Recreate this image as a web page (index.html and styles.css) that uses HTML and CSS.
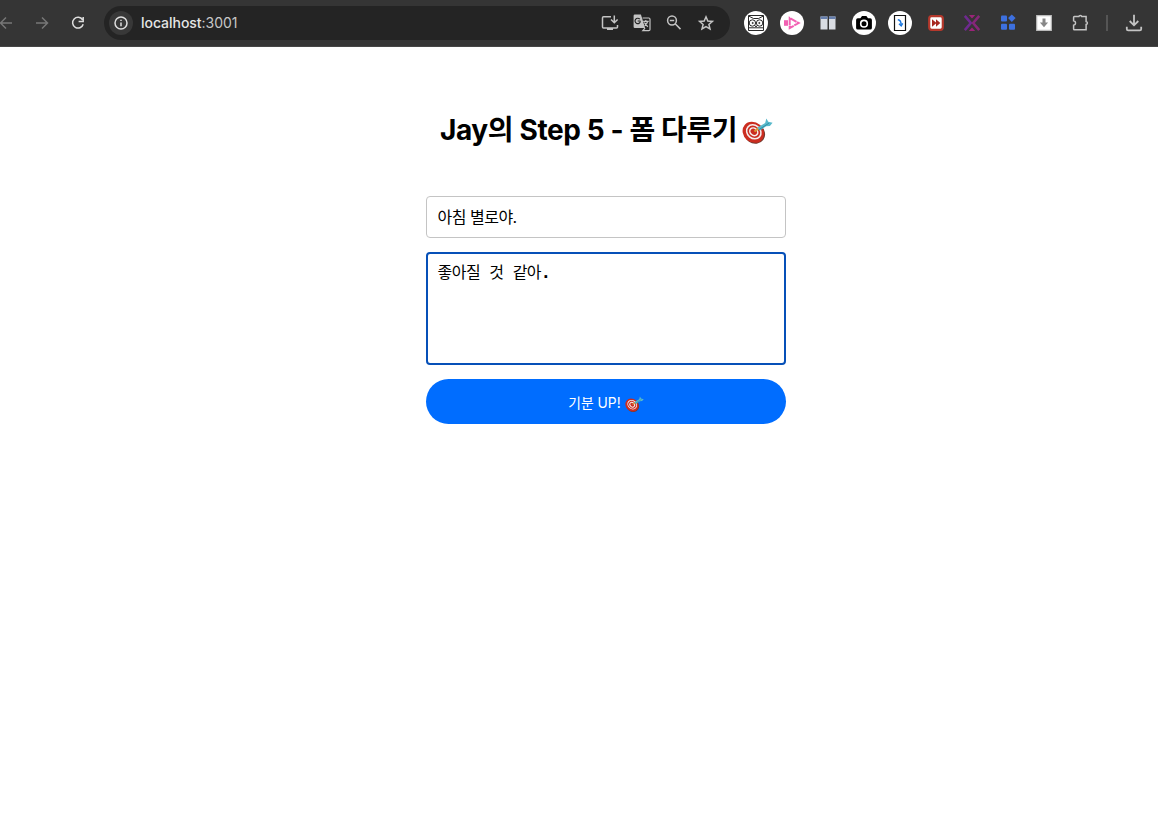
FILE: index.html
```html
<!DOCTYPE html>
<html lang="ko">
<head>
<meta charset="utf-8">
<title>Step 5</title>
<link rel="stylesheet" href="styles.css">
</head>
<body>
<svg class="defs" width="0" height="0">
  <symbol id="dart" viewBox="0 0 30 26">
    <ellipse cx="12.2" cy="15" rx="10.4" ry="9.6" transform="rotate(35 12.2 15)" fill="#6e3b31"/>
    <ellipse cx="11" cy="13.8" rx="11" ry="9.6" transform="rotate(40 11 13.8)" fill="#cb2d20"/>
    <g fill="none" transform="rotate(40 11.4 13.3)">
      <ellipse cx="11.4" cy="13.3" rx="7.4" ry="6.3" stroke="#f5eeee" stroke-width="1.5"/>
      <ellipse cx="11.4" cy="13.3" rx="4.1" ry="3.4" stroke="#f5eeee" stroke-width="1.5"/>
    </g>
    <path d="M12 13l4-3" stroke="#d79b38" stroke-width="2"/>
    <path d="M15 9.2L22.4 4.8 23.6 0.4 25.4 3.6 29.6 4.6 27 7.6 23.4 8 17 12.2z" fill="#58b9cb"/>
    <path d="M16.5 11.2L26 5" stroke="#2c8ca1" stroke-width=".9"/>
  </symbol>
</svg>
<header class="toolbar">
  <nav class="nav">
    <svg class="icon dim" viewBox="0 0 24 24"><path d="M18 12H6.8M12 6.5L6.5 12l5.5 5.5"/></svg>
    <svg class="icon dim" viewBox="0 0 24 24"><path d="M6 12h11.2M12 6.5l5.5 5.5-5.5 5.5"/></svg>
    <svg class="icon light" viewBox="0 0 24 24"><path d="M16.6 8.8A5.4 5.4 0 1 0 17.2 13.2M17.2 6v4.4h-4.6"/></svg>
  </nav>
  <div class="address">
    <span class="info"><svg class="icon light" viewBox="0 0 24 24"><circle cx="12" cy="12" r="6"/><path d="M12 11.4v3.8M12 8.7v1.4"/></svg></span>
    <span class="url">localhost<span class="port">:3001</span></span>
    <div class="actions">
      <svg class="icon" viewBox="0 0 24 24"><path d="M13 5.8H5.5q-1 0-1 1v9.1q0 1 1 1h13q1 0 1-1V14M16.3 4.5v6.8M13 8.5l3.3 3.3 3.3-3.3"/><path d="M9 17h6v2H9z" class="solid"/></svg>
      <svg class="icon" viewBox="0 0 24 24"><path d="M4.8 3.5h6.1l1.2 3.7 3 9.8H4.8q-1.2 0-1.2-1.2V4.7q0-1.2 1.2-1.2z" class="solid"/><path d="M10.5 10H7.7M9.8 8.2a2.7 2.7 0 1 0 .6 2.3" class="cut"/><path d="M12.6 7h6.2q1.2 0 1.2 1.2v10.3q0 1.2-1.2 1.2h-6l2.2-2.6M13.2 10.4h5.5M15.8 9v1.4M17.6 10.5q-.6 2.6-3 4M14.4 11.5q1 2.3 3.5 4.3" stroke-width="1.2"/></svg>
      <svg class="icon" viewBox="0 0 24 24"><circle cx="10" cy="9.5" r="4.4"/><path d="M13.2 12.8l5.3 5.3M7.8 9.5h4.4"/></svg>
      <svg class="icon" viewBox="0 0 24 24"><path d="M12 5.8l1.8 4.2 4.6.4-3.5 3 1.1 4.5-4-2.4-4 2.4 1.1-4.5-3.5-3 4.6-.4z"/></svg>
    </div>
  </div>
  <div class="extensions">
    <svg class="icon" viewBox="0 0 24 24"><circle cx="12" cy="12" r="12" fill="#fff" stroke="none"/><g stroke="#111" stroke-width=".9"><path d="M4.5 4.5h15v15h-15zM5 5.2l4.5 2.3h5L19 5.2M5 16.8h14M11 14.5l1 1.5 1-1.5"/><circle cx="8.4" cy="12" r="3.2"/><circle cx="15.6" cy="12" r="3.2"/><circle cx="8.7" cy="12" r=".6"/><circle cx="15.3" cy="12" r=".6"/></g></svg>
    <svg class="icon" viewBox="0 0 24 24"><circle cx="12" cy="12" r="12" fill="#fff" stroke="none"/><path d="M4 9.2h4v5.6H4z" fill="#f261b3" stroke="none"/><path d="M9.7 7v10l9-5z" stroke="#f261b3" stroke-width="2" stroke-dasharray="7 .6"/></svg>
    <svg class="icon" viewBox="0 0 24 24"><g stroke="none"><path d="M4.5 5.5h7v13h-7zM13 5.5h6.5v13H13z" fill="#d9dce2"/><path d="M4.5 5.5h7v2.6h-7zM13 5.5h6.5v2.6H13z" fill="#667fae"/></g></svg>
    <svg class="icon" viewBox="0 0 24 24"><circle cx="12" cy="12" r="12" fill="#fff" stroke="none"/><path d="M5.8 7.2h2.6L10 5h4.4L16 7.2h2.2q1.7 0 1.7 1.7v8q0 1.7-1.7 1.7H5.8q-1.7 0-1.7-1.7v-8q0-1.7 1.7-1.7z" fill="#000" stroke="none"/><circle cx="12" cy="12.7" r="3.3" stroke="#fff" stroke-width="1.6"/></svg>
    <svg class="icon" viewBox="0 0 24 24"><circle cx="12" cy="12" r="12" fill="#fff" stroke="none"/><path d="M6.5 4.5h11v15h-11z" stroke="#111" stroke-width="1.2"/><path d="M9.8 8.7q3.4.4 3.2 4.6M11 12.8l2.2 2 1.5-2.4" stroke="#1675e0" stroke-width="1.4"/></svg>
    <svg class="icon" viewBox="0 0 24 24"><rect x="5.2" y="5.2" width="13.6" height="13.6" rx="2.5" fill="#fff" stroke="#b5382c" stroke-width="2.2"/><path d="M8 8.3l4 3.3V8.3l4.3 3.7-4.3 3.7v-3.3l-4 3.3z" fill="#a82820" stroke="none"/></svg>
    <svg class="icon" viewBox="0 0 24 24"><g fill="none" stroke-width="2.6"><path d="M4.8 4.8l6 7.2-6 7.2" stroke="#6e2a8e"/><path d="M19.2 4.8l-6 7.2 6 7.2" stroke="#852778"/></g><path d="M8.8 4h6.4L12 7.4zM8.8 20h6.4L12 16.6z" fill="#9a2478" stroke="none"/></svg>
    <svg class="icon" viewBox="0 0 24 24"><g fill="#3d70df" stroke="none"><rect x="5" y="4.5" width="6" height="6" rx="1"/><rect x="5" y="12.7" width="6" height="6" rx="1"/><rect x="13" y="12.7" width="6" height="6" rx="1"/><path d="M15.8 3.4l3.8 3.7-3.8 3.8-3.7-3.8z"/></g></svg>
    <svg class="icon" viewBox="0 0 24 24"><path d="M4.7 4.7h14.6v14.6H4.7z" fill="#fff" stroke="#bbb" stroke-width="1.2"/><path d="M10.5 7.5h3v4h2.6L12 16.2l-4.1-4.7h2.6z" fill="#888" stroke="none"/></svg>
    <svg class="icon" viewBox="0 0 24 24"><path d="M6.4 5.6h4.4q.2-1.2 1.5-1.2t1.5 1.2h4.3v5q1.3.2 1.3 1.4t-1.3 1.4v5.4H6.4q-.8 0-.8-.8v-3.8q2-.3 2-2.2t-2-2.2V6.4q0-.8.8-.8z"/></svg>
    <span class="divider"></span>
    <svg class="icon" viewBox="0 0 24 24"><path d="M12 3.8v10M7.7 10l4.3 4.3 4.3-4.3M4.8 15.8V18q0 1.4 1.4 1.4h11.6q1.4 0 1.4-1.4v-2.2" stroke-width="1.8"/></svg>
  </div>
</header>
<main class="page">
  <h1 class="title"><span class="title-text">Jay의 Step 5 - 폼 다루기</span><svg class="title-dart"><use href="#dart"/></svg></h1>
  <form class="form">
    <input class="field" type="text" value="아침 별로야.">
    <div class="field memo" role="textbox" aria-multiline="true" contenteditable="true">좋아질 것 같아<b>.</b></div>
    <button class="submit" type="button"><span class="submit-text">기분 UP!</span><svg class="submit-dart"><use href="#dart"/></svg></button>
  </form>
</main>
</body>
</html>
```
FILE: styles.css
```css
* { box-sizing: border-box; }
body { margin: 0; background: #fff; font-family: Inter, "Noto Sans CJK KR", sans-serif; overflow: hidden; }
.defs { display: block; }
.toolbar { display: flex; height: 47px; padding-top: 6px; background: #353535; border-bottom: 1px solid #464646; overflow: hidden; }
.nav { display: flex; gap: 12px; margin-left: -6px; padding-top: 5px; width: 110px; flex: none; }
.icon { display: block; width: 24px; height: 24px; flex: none; fill: none; stroke: #c4c4c4; stroke-width: 1.5; }
.dim { stroke: #777; }
.light { stroke: #dedede; }
.solid { fill: #c4c4c4; stroke: none; }
.cut { stroke: #242424; stroke-width: 1.2; }
.address { display: flex; align-items: center; width: 626px; height: 34px; padding: 0 12px 0 5px; border-radius: 17px; background: #242424; flex: none; }
.info { display: block; width: 24px; height: 24px; border-radius: 50%; background: #383838; }
.url { margin-left: 8px; color: #e5e5e5; font-size: 14px; font-weight: 500; line-height: 20px; letter-spacing: -0.03px; }
.port { color: #c7c7c7; font-weight: 400; }
.actions { display: flex; gap: 8px; margin-left: auto; }
.extensions { display: flex; gap: 12px; margin-left: 14px; padding-top: 5px; flex: none; }
.divider { width: 2px; height: 16px; margin: 4px 2px 0; background: #555; }
.page { width: 360px; margin-left: 426px; padding-top: 63px; }
.title { display: flex; align-items: center; margin: 0 0 45px 14px; height: 41px; font-size: 28px; line-height: 41px; font-weight: 700; color: #000; white-space: nowrap; }
.title-text { letter-spacing: -0.39px; }
.title-dart { width: 31px; height: 27px; margin: 1px 0 0 5px; }
.form { display: flex; flex-direction: column; gap: 14px; }
.field { display: block; width: 360px; height: 42px; margin: 0; padding: 0 10px 3px 10.5px; border: 1px solid #c4c4c4; border-radius: 4px; outline: 0; background: #fff; color: #000; font: 16px/24px Inter, "Noto Sans CJK KR", sans-serif; letter-spacing: -0.5px; }
.memo { height: 113px; padding: 7px 9.5px; border: 2px solid #0650b8; overflow: hidden; font-family: "DejaVu Sans Mono", "Noto Sans CJK KR", monospace; }
.submit { display: flex; align-items: center; justify-content: center; height: 45px; padding: 3px 0 0; border: 0; border-radius: 23px; background: #006dff; color: #fff; font: 13.8px/20px Inter, "Noto Sans CJK KR", sans-serif; }
.submit-dart { width: 19px; height: 17px; margin: 3px 0 0 4px; }
```
